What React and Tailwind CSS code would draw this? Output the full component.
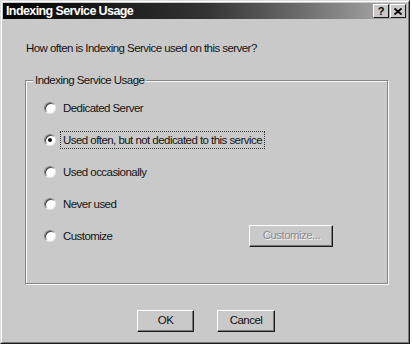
import React from "react";

const font = { fontFamily: '"Liberation Sans", Arial, sans-serif' };

const Radio = ({ checked }) => (
  <span className="relative w-[12px] h-[12px] rounded-full bg-white border border-t-[#808080] border-l-[#808080] border-r-[#e8e8e8] border-b-[#e8e8e8] shadow-[inset_1px_1px_0_#404040] flex items-center justify-center shrink-0">
    {checked && <span className="w-[4px] h-[4px] rounded-full bg-[#111]" />}
  </span>
);

const Button = ({ children, className = "", disabled = false }) => (
  <div
    className={
      "h-[22px] flex items-center justify-center bg-[#c9c9c9] border border-t-white border-l-white border-r-[#1a1a1a] border-b-[#1a1a1a] shadow-[inset_-1px_-1px_0_#7a7a7a] " +
      className
    }
  >
    <span
      className={
        disabled
          ? "text-[#8c8c8c] [text-shadow:1px_1px_0_#f2f2f2]"
          : "text-[#111]"
      }
    >
      {children}
    </span>
  </div>
);

const options = [
  "Dedicated Server",
  "Used often, but not dedicated to this service",
  "Used occasionally",
  "Never used",
  "Customize",
];

export default function App() {
  return (
    <div className="w-[412px] h-[346px] bg-white" style={font}>
      <div className="w-[410px] h-[344px] border border-t-[#dcdcdc] border-l-[#dcdcdc] border-r-[#1a1a1a] border-b-[#1a1a1a] bg-[#c9c9c9]">
        <div className="h-full border border-t-white border-l-white border-r-[#7a7a7a] border-b-[#7a7a7a] p-px flex flex-col text-[11.5px] tracking-[-0.55px] text-[#141414]">
          {/* title bar */}
          <div className="h-[16px] flex items-center justify-between bg-gradient-to-r from-[#050505] via-[#333] to-[#b4b4b4] pl-[3px] pr-[1px]">
            <span className="text-white font-bold text-[12.5px] tracking-[-0.6px] leading-none">
              Indexing Service Usage
            </span>
            <div className="flex gap-[1px]">
              <div className="w-[16px] h-[14px] bg-[#c9c9c9] border border-t-white border-l-white border-r-[#1a1a1a] border-b-[#1a1a1a] flex items-center justify-center">
                <span className="font-bold text-[11px] leading-none text-black tracking-normal">?</span>
              </div>
              <div className="w-[16px] h-[14px] bg-[#c9c9c9] border border-t-white border-l-white border-r-[#1a1a1a] border-b-[#1a1a1a] flex items-center justify-center">
                <svg width="8" height="7" viewBox="0 0 8 7">
                  <path d="M0.5 0.5 L7.5 6.5 M7.5 0.5 L0.5 6.5" stroke="#000" strokeWidth="1.8" />
                </svg>
              </div>
            </div>
          </div>

          {/* body */}
          <div className="flex flex-col">
            <p className="mt-[22px] ml-[23px] leading-[14px]">
              How often is Indexing Service used on this server?
            </p>

            <div className="relative mt-[25px] ml-[22px] w-[363px] h-[204px] border border-[#858585] shadow-[1px_1px_0_#fafafa,inset_1px_1px_0_#fafafa]">
              <span className="absolute -top-[8px] left-[7px] px-[2px] bg-[#c9c9c9] leading-[14px]">
                Indexing Service Usage
              </span>
              <div className="flex flex-col pt-[11px] pl-[18px]">
                {options.map((label, i) => (
                  <div key={label} className="h-[32px] flex items-center">
                    <Radio checked={i === 1} />
                    <span
                      className={
                        "ml-[6px] leading-[14px] px-px " +
                        (i === 1
                          ? "outline outline-1 outline-dotted outline-[#333] outline-offset-[1px]"
                          : "")
                      }
                    >
                      {label}
                    </span>
                    {i === 4 && (
                      <Button disabled className="ml-[136px] w-[84px]">
                        Customize...
                      </Button>
                    )}
                  </div>
                ))}
              </div>
            </div>

            <div className="flex mt-[26px] ml-[134px] gap-[23px]">
              <Button className="w-[57px]">OK</Button>
              <Button className="w-[58px]">Cancel</Button>
            </div>
          </div>
        </div>
      </div>
    </div>
  );
}
